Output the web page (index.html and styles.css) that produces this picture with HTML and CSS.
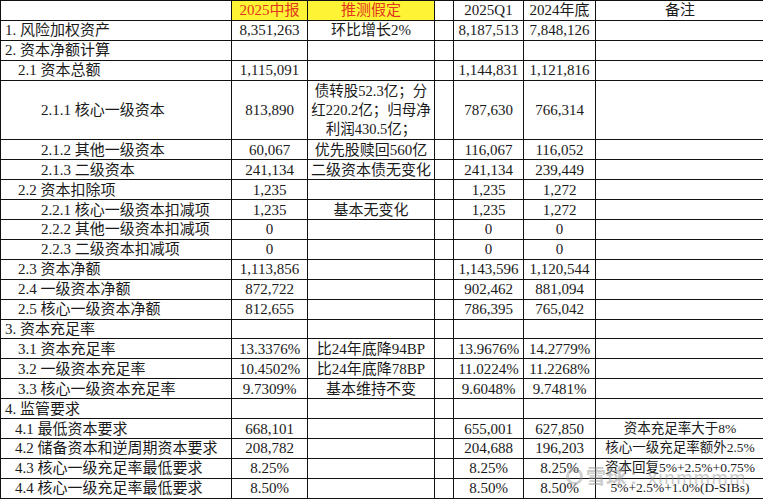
FILE: index.html
```html
<!DOCTYPE html>
<html lang="zh-CN">
<head>
<meta charset="utf-8">
<title>资本充足率测算</title>
<link rel="stylesheet" href="styles.css">
</head>
<body>
<div class="sheet">
<table class="grid">
  <colgroup>
    <col class="c-name"><col class="c-h1"><col class="c-note1"><col class="c-gap"><col class="c-q1"><col class="c-y24"><col class="c-note2">
  </colgroup>
  <tbody>
    <tr><td></td><td class="hl">2025中报</td><td class="hl">推测假定</td><td></td><td>2025Q1</td><td>2024年底</td><td>备注</td></tr>
    <tr><td class="l1">1. 风险加权资产</td><td>8,351,263</td><td>环比增长2%</td><td></td><td>8,187,513</td><td>7,848,126</td><td></td></tr>
    <tr><td class="l1">2. 资本净额计算</td><td></td><td></td><td></td><td></td><td></td><td></td></tr>
    <tr><td class="l2">2.1 资本总额</td><td>1,115,091</td><td></td><td></td><td>1,144,831</td><td>1,121,816</td><td></td></tr>
    <tr class="tall"><td class="l3">2.1.1 核心一级资本</td><td>813,890</td><td class="multi">债转股52.3亿；分<br>红220.2亿；归母净<br>利润430.5亿；</td><td></td><td>787,630</td><td>766,314</td><td></td></tr>
    <tr><td class="l3">2.1.2 其他一级资本</td><td>60,067</td><td>优先股赎回560亿</td><td></td><td>116,067</td><td>116,052</td><td></td></tr>
    <tr><td class="l3">2.1.3 二级资本</td><td>241,134</td><td>二级资本债无变化</td><td></td><td>241,134</td><td>239,449</td><td></td></tr>
    <tr><td class="l2">2.2 资本扣除项</td><td>1,235</td><td></td><td></td><td>1,235</td><td>1,272</td><td></td></tr>
    <tr><td class="l3">2.2.1 核心一级资本扣减项</td><td>1,235</td><td>基本无变化</td><td></td><td>1,235</td><td>1,272</td><td></td></tr>
    <tr><td class="l3">2.2.2 其他一级资本扣减项</td><td>0</td><td></td><td></td><td>0</td><td>0</td><td></td></tr>
    <tr><td class="l3">2.2.3 二级资本扣减项</td><td>0</td><td></td><td></td><td>0</td><td>0</td><td></td></tr>
    <tr><td class="l2">2.3 资本净额</td><td>1,113,856</td><td></td><td></td><td>1,143,596</td><td>1,120,544</td><td></td></tr>
    <tr><td class="l2">2.4 一级资本净额</td><td>872,722</td><td></td><td></td><td>902,462</td><td>881,094</td><td></td></tr>
    <tr><td class="l2">2.5 核心一级资本净额</td><td>812,655</td><td></td><td></td><td>786,395</td><td>765,042</td><td></td></tr>
    <tr><td class="l1">3. 资本充足率</td><td></td><td></td><td></td><td></td><td></td><td></td></tr>
    <tr><td class="l2">3.1 资本充足率</td><td>13.3376%</td><td>比24年底降94BP</td><td></td><td>13.9676%</td><td>14.2779%</td><td></td></tr>
    <tr><td class="l2">3.2 一级资本充足率</td><td>10.4502%</td><td>比24年底降78BP</td><td></td><td>11.0224%</td><td>11.2268%</td><td></td></tr>
    <tr><td class="l2">3.3 核心一级资本充足率</td><td>9.7309%</td><td>基本维持不变</td><td></td><td>9.6048%</td><td>9.7481%</td><td></td></tr>
    <tr><td class="l1">4. 监管要求</td><td></td><td></td><td></td><td></td><td></td><td></td></tr>
    <tr><td class="l4">4.1 最低资本要求</td><td>668,101</td><td></td><td></td><td>655,001</td><td>627,850</td><td class="small">资本充足率大于8%</td></tr>
    <tr><td class="l4">4.2 储备资本和逆周期资本要求</td><td>208,782</td><td></td><td></td><td>204,688</td><td>196,203</td><td class="small">核心一级充足率额外2.5%</td></tr>
    <tr><td class="l4">4.3 核心一级充足率最低要求</td><td>8.25%</td><td></td><td></td><td>8.25%</td><td>8.25%</td><td class="small">资本回复5%+2.5%+0.75%</td></tr>
    <tr><td class="l4">4.4 核心一级充足率最低要求</td><td>8.50%</td><td></td><td></td><td>8.50%</td><td>8.50%</td><td class="small">5%+2.5%+1.0%(D-SIBs)</td></tr>
  </tbody>
</table>
<div class="watermark"><span class="wm-logo"></span><span class="wm-brand">雪球</span><span class="wm-user">：xinmmmm</span></div>
</div>
</body>
</html>
```

FILE: styles.css
```css
html, body {
  margin: 0;
  padding: 0;
  background: #ffffff;
}
body {
  width: 763px;
  height: 500px;
  overflow: hidden;
  font-family: "Liberation Serif", "Noto Sans CJK SC", serif;
  font-size: 15px;
  color: #1a1a1a;
}
.sheet {
  position: relative;
  width: 763px;
  height: 500px;
  overflow: hidden;
}
.grid {
  border-collapse: collapse;
  table-layout: fixed;
  width: 764px;
}
.c-name { width: 231px; }
.c-h1 { width: 76px; }
.c-note1 { width: 127px; }
.c-gap { width: 19px; }
.c-q1 { width: 70px; }
.c-y24 { width: 72px; }
.c-note2 { width: 169px; }
.grid tr { height: 19.92px; }
.grid tr.tall { height: 59.76px; }
.grid td {
  border: 1px solid #111;
  padding: 0;
  line-height: 18px;
  text-align: center;
  white-space: nowrap;
  overflow: hidden;
  vertical-align: middle;
}
.grid td.hl {
  background: #fff335;
  color: #e2361f;
}
.grid td.l1 { text-align: left; padding-left: 4px; }
.grid td.l2 { text-align: left; padding-left: 17px; }
.grid td.l3 { text-align: left; padding-left: 40px; }
.grid td.l4 { text-align: left; padding-left: 14px; }
.grid td.multi { line-height: 19px; font-size: 14.5px; }
.grid td.small { font-size: 13.5px; }
.watermark {
  position: absolute;
  left: 566px;
  top: 465px;
  display: flex;
  align-items: center;
  gap: 3px;
  color: rgba(150, 150, 150, 0.5);
  font-family: "Noto Sans CJK SC", sans-serif;
  pointer-events: none;
}
.wm-logo {
  width: 17px;
  height: 17px;
  border: 3px solid rgba(150, 150, 150, 0.45);
  border-radius: 50%;
  box-sizing: border-box;
}
.wm-brand { font-size: 20px; font-weight: 700; line-height: 22px; }
.wm-user { font-size: 18px; line-height: 22px; letter-spacing: 1px; }
```
